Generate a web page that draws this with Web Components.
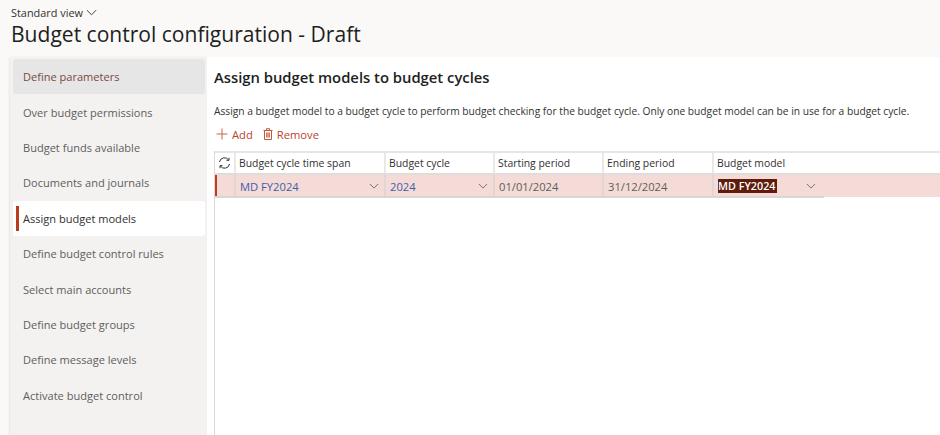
<!DOCTYPE html>
<html>
<head>
<meta charset="utf-8">
<style>
html, body { margin: 0; padding: 0; height: 435px; overflow: hidden; background: #faf9f8; font-family: "Open Sans", "Noto Sans", sans-serif; }
</style>
</head>
<body>
<config-page></config-page>
<script>
const chevron = (w, h, color) => `<svg width="${w}" height="${h}" viewBox="0 0 12 7" fill="none" stroke="${color}" stroke-width="1"><path d="M1 1l5 5 5-5"/></svg>`;

class PageHeader extends HTMLElement {
	constructor() {
		super();
		this.attachShadow({ mode: 'open' });
	}

	connectedCallback() {
		this.shadowRoot.innerHTML = /* html */ `
      <style>
        :host { display: block; height: 57px; box-sizing: border-box; padding: 5px 0 0 11px; color: #201f1e; }
        .view { display: flex; align-items: center; gap: 3px; font-size: 10.9px; line-height: 15px; color: #323130; }
        h1 { margin: 1px 0 0; font-size: 21.05px; line-height: 26px; font-weight: 500; white-space: nowrap; }
      </style>
      <div class="view">Standard view ${chevron(11, 7, '#323130')}</div>
      <h1><slot></slot></h1>
    `;
	}
}

class SideNav extends HTMLElement {
	constructor() {
		super();
		this.attachShadow({ mode: 'open' });
	}

	connectedCallback() {
		this.shadowRoot.innerHTML = /* html */ `
      <style>
        :host { display: flex; flex-direction: column; width: 197px; margin-left: 10px; box-sizing: border-box; padding: 2px 2px 0 3px; background: #f3f2f1; border-radius: 3px 0 0 0; box-shadow: -1px 0 2px #e8e6e4; }
      </style>
      <slot></slot>
    `;
	}
}

class NavItem extends HTMLElement {
	constructor() {
		super();
		this.attachShadow({ mode: 'open' });
	}

	connectedCallback() {
		this.shadowRoot.innerHTML = /* html */ `
      <style>
        :host { display: flex; align-items: center; height: 35.4px; box-sizing: border-box; padding-left: 10px; font-size: 11.05px; color: #605e5c; border-radius: 3px; white-space: nowrap; position: relative; }
        :host([hover]) { background: #e6e6e6; color: #7a4a3e; }
        :host([active]) { background: #fff; color: #323130; }
        :host([active])::before { content: ''; position: absolute; left: 3px; top: 5px; bottom: 5px; width: 3px; background: #b83c1e; }
      </style>
      <slot></slot>
    `;
	}
}

class ToolButton extends HTMLElement {
	constructor() {
		super();
		this.attachShadow({ mode: 'open' });
	}

	connectedCallback() {
		this.shadowRoot.innerHTML = /* html */ `
      <style>
        :host { display: inline-flex; align-items: center; gap: 4px; font-size: 11.2px; color: #b8442c; }
        ::slotted(svg) { display: block; }
      </style>
      <slot name="icon"></slot><slot></slot>
    `;
	}
}

class BudgetGrid extends HTMLElement {
	constructor() {
		super();
		this.attachShadow({ mode: 'open' });
	}

	connectedCallback() {
		const arrow = chevron(10, 6, '#605e5c');
		this.shadowRoot.innerHTML = /* html */ `
      <style>
        :host { display: block; flex: 1; font-size: 10.4px; border-left: 1px solid #dcdad8; }
        .head, .row { display: grid; grid-template-columns: 21px 150px 109px 109px 110px 1fr; }
        .head { height: 24px; border-top: 2px solid #e8e6e4; border-bottom: 2px solid #dfdcda; box-sizing: border-box; color: #323130; font-weight: 500; }
        .head > div { display: flex; align-items: center; padding-left: 3px; border-right: 2px solid #ebe9e7; white-space: nowrap; }
        .head > div:last-child { border-right: 0; }
        .head .sync { padding: 0; justify-content: center; }
        .row { height: 22px; background: #f4dbd7; position: relative; font-size: 11.2px; color: #605e5c; }
        .row::before { content: ''; position: absolute; left: 0; top: 0; bottom: 0; width: 2px; background: #c23b1c; }
        .row::after { content: ''; position: absolute; left: 0; bottom: -1px; width: 609px; height: 2px; background: #d9d6d4; }
        .row > div { display: flex; align-items: center; justify-content: space-between; padding: 0 5px 0 4px; border-right: 2px solid #e3d5d2; white-space: nowrap; }
        .row > div:last-child { border-right: 0; justify-content: flex-start; padding-left: 4px; }
        .link { color: #3f5fa8; }
        .sel { background: #5e1c0c; color: #fff; font-weight: 600; font-size: 10.8px; line-height: 14px; width: 59px; overflow: hidden; }
        .last svg { margin-left: 29px; }
      </style>
      <div class="head">
        <div class="sync">
          <svg width="13" height="12" viewBox="0 0 13 12" fill="none" stroke="#323130" stroke-width="1">
            <path d="M1.5 5A5 5 0 0 1 10.6 3M11.5 7A5 5 0 0 1 2.4 9"/>
            <path d="M11 .8V3.3H8.5M2 11.2V8.7H4.5"/>
          </svg>
        </div>
        <div>Budget cycle time span</div>
        <div>Budget cycle</div>
        <div>Starting period</div>
        <div>Ending period</div>
        <div>Budget model</div>
      </div>
      <div class="row">
        <div></div>
        <div class="link">MD FY2024 ${arrow}</div>
        <div class="link">2024 ${arrow}</div>
        <div>01/01/2024</div>
        <div>31/12/2024</div>
        <div class="last"><span class="sel">MD FY2024</span>${arrow}</div>
      </div>
    `;
	}
}

class ConfigPage extends HTMLElement {
	constructor() {
		super();
		this.attachShadow({ mode: 'open' });
	}

	connectedCallback() {
		this.shadowRoot.innerHTML = /* html */ `
      <style>
        :host { display: flex; flex-direction: column; height: 435px; }
        .body { flex: 1; display: flex; min-height: 0; }
        main { flex: 1; min-width: 0; background: #fff; display: flex; flex-direction: column; padding-left: 7px; }
        h2 { margin: 10px 0 0 0; font-size: 14.8px; line-height: 20px; font-weight: 600; color: #201f1e; white-space: nowrap; }
        p { margin: 17px 0 0; font-size: 10.22px; line-height: 14px; color: #323130; white-space: nowrap; }
        .tools { display: flex; gap: 10px; height: 20px; align-items: center; margin: 6px 0 7px 2px; }
      </style>
      <page-header>Budget control configuration - Draft</page-header>
      <div class="body">
        <side-nav>
          <nav-item hover>Define parameters</nav-item>
          <nav-item>Over budget permissions</nav-item>
          <nav-item>Budget funds available</nav-item>
          <nav-item>Documents and journals</nav-item>
          <nav-item active>Assign budget models</nav-item>
          <nav-item>Define budget control rules</nav-item>
          <nav-item>Select main accounts</nav-item>
          <nav-item>Define budget groups</nav-item>
          <nav-item>Define message levels</nav-item>
          <nav-item>Activate budget control</nav-item>
        </side-nav>
        <main>
          <h2>Assign budget models to budget cycles</h2>
          <p>Assign a budget model to a budget cycle to perform budget checking for the budget cycle. Only one budget model can be in use for a budget cycle.</p>
          <div class="tools">
            <tool-button>
              <svg slot="icon" width="12" height="12" viewBox="0 0 12 12" stroke="#c9654f" fill="none"><path d="M6 .5v11M.5 6h11"/></svg>
              Add
            </tool-button>
            <tool-button>
              <svg slot="icon" width="10" height="12" viewBox="0 0 10 12" stroke="#c4563c" fill="none"><path d="M1.5 2.5v9h7v-9M.5 2.5h9M3.5 2.5V.7h3v1.8M3.7 4.5v5M5 4.5v5M6.3 4.5v5"/></svg>
              Remove
            </tool-button>
          </div>
          <budget-grid></budget-grid>
        </main>
      </div>
    `;
	}
}

customElements.define('page-header', PageHeader);
customElements.define('side-nav', SideNav);
customElements.define('nav-item', NavItem);
customElements.define('tool-button', ToolButton);
customElements.define('budget-grid', BudgetGrid);
customElements.define('config-page', ConfigPage);
</script>
</body>
</html>
